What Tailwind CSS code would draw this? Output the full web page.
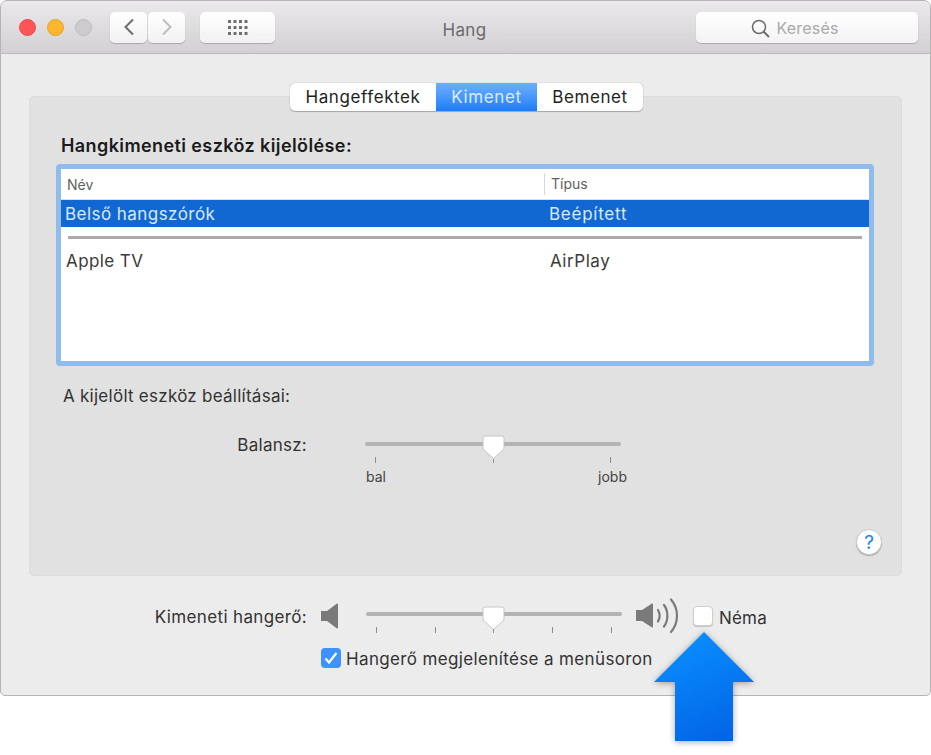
<!DOCTYPE html>
<html lang="hu">
<head>
<meta charset="UTF-8">
<title>Hang</title>
<script src="https://cdn.jsdelivr.net/npm/@tailwindcss/browser@4"></script>
</head>
<body class="bg-white w-[931px] h-[755px] overflow-hidden font-['Inter',sans-serif] text-[#2c2c2c]">
<div class="relative w-[931px] h-[755px]">
  <!-- window -->
  <div class="w-[931px] h-[696px] bg-[#ececec] rounded-t-[7px] rounded-b-[5px] border border-[#b4b4b4] flex flex-col">
    <!-- toolbar -->
    <div class="h-[53px] shrink-0 rounded-t-[6px] border-b border-[#bdbbbd] bg-gradient-to-b from-[#ebe9eb] to-[#d2d0d2] flex items-center pl-[18px] pr-[12px]">
      <div class="flex gap-[11px]">
        <span class="w-[17px] h-[17px] rounded-full bg-[#fd5557] border border-[#e9494c]"></span>
        <span class="w-[17px] h-[17px] rounded-full bg-[#fdb62e] border border-[#e6a526]"></span>
        <span class="w-[17px] h-[17px] rounded-full bg-[#cdcbcd] border border-[#bebcbe]"></span>
      </div>
      <div class="flex gap-px ml-[18px]">
        <div class="w-[37px] h-[31px] rounded-[5px] bg-gradient-to-b from-white to-[#f1f1f1] shadow-[0_1px_1px_#a9a7a9] flex items-center justify-center">
          <svg width="12" height="18" viewBox="0 0 12 18" fill="none" stroke="#6c6c6c" stroke-width="2"><path d="M10 1.500 2.500 9l7.500 7.500"/></svg>
        </div>
        <div class="w-[37px] h-[31px] rounded-[5px] bg-gradient-to-b from-white to-[#f1f1f1] shadow-[0_1px_1px_#a9a7a9] flex items-center justify-center">
          <svg width="12" height="18" viewBox="0 0 12 18" fill="none" stroke="#bdbdbd" stroke-width="2"><path d="M2 1.500 9.500 9 2 16.500"/></svg>
        </div>
      </div>
      <div class="w-[75px] h-[31px] ml-[15px] rounded-[5px] bg-gradient-to-b from-white to-[#f1f1f1] shadow-[0_1px_1px_#a9a7a9] flex items-center justify-center">
        <svg width="20" height="15" viewBox="0 0 20 15" fill="#6e6e6e">
          <rect x="0" y="0" width="3" height="3"/><rect x="5.500" y="0" width="3" height="3"/><rect x="11" y="0" width="3" height="3"/><rect x="16.500" y="0" width="3" height="3"/>
          <rect x="0" y="6" width="3" height="3"/><rect x="5.500" y="6" width="3" height="3"/><rect x="11" y="6" width="3" height="3"/><rect x="16.500" y="6" width="3" height="3"/>
          <rect x="0" y="12" width="3" height="3"/><rect x="5.500" y="12" width="3" height="3"/><rect x="11" y="12" width="3" height="3"/><rect x="16.500" y="12" width="3" height="3"/>
        </svg>
      </div>
      <div class="flex-1 text-center text-[17px] tracking-[0.4px] text-[#6b6a6b] pr-[42px] pt-[7px]">Hang</div>
      <div class="w-[222px] h-[31px] rounded-[5px] bg-gradient-to-b from-white to-[#f3f3f3] shadow-[0_1px_1px_#a9a7a9] flex items-center justify-center gap-[6px] pr-[24px] pt-[2px]">
        <svg width="19" height="19" viewBox="0 0 19 19" fill="none" stroke="#6c6c6c" stroke-width="1.500"><circle cx="8" cy="8" r="6.500"/><path d="m12.500 12.500 5.500 5.500" stroke-width="2"/></svg>
        <span class="text-[16px] text-[#a9a9a9] tracking-[0.2px]">Keresés</span>
      </div>
    </div>
    <!-- content -->
    <div class="relative flex-1 px-[28px] pt-[42px]">
      <!-- tabbed panel -->
      <div class="h-[480px] bg-[#e1e1e1] border border-[#dcdcdc] rounded-[5px] px-[27px] pt-[37px]">
        <div class="ml-[4px] text-[18px] tracking-[0.4px] font-semibold text-[#1b1b1b] leading-[24px]">Hangkimeneti eszköz kijelölése:</div>
        <!-- device list -->
        <div class="mt-[6px] -ml-px w-[818px] h-[202px] border-[5px] border-[#8fbcec] rounded-[4px] bg-white flex flex-col">
          <div class="h-[31px] shrink-0 flex items-center border-b border-[#dedede] text-[14px] text-[#5f5f5f]">
            <span class="w-[483px] pl-[6px]">Név</span>
            <span class="h-[22px] border-l border-[#d8d8d8] pl-[6px] leading-[22px]">Típus</span>
          </div>
          <div class="h-[27px] shrink-0 flex items-center bg-[#1268d3] text-[#dce9f8] text-[17px] pt-[3px]">
            <span class="w-[488px] pl-[4px] tracking-[0.45px]">Belső hangszórók</span>
            <span class="tracking-[0.75px]">Beépített</span>
          </div>
          <div class="h-[3px] shrink-0 mx-[7px] mt-[9px] bg-[#ababab]"></div>
          <div class="h-[27px] mt-[8px] flex items-center text-[17px] text-[#3a3a3a] pt-[3px]">
            <span class="w-[489px] pl-[5px] tracking-[0.4px]">Apple TV</span>
            <span class="tracking-[0.55px]">AirPlay</span>
          </div>
        </div>
        <div class="mt-[18px] ml-[6px] text-[17px] tracking-[0.26px] leading-[24px] text-[#333]">A kijelölt eszköz beállításai:</div>
        <!-- balance -->
        <div class="mt-[25px] flex">
          <div class="w-[250px] text-right text-[17px] tracking-[0.25px] leading-[24px] text-[#333]">Balansz:</div>
          <div class="relative ml-[58px] w-[256px] h-[60px]">
            <div class="absolute left-0 right-0 top-[9px] h-[4px] rounded-full bg-[#b3b3b3]"></div>
            <svg class="absolute left-[117px] top-[2px]" width="23" height="25" viewBox="0 0 23 25"><path d="M3 1h17a2 2 0 0 1 2 2v11l-10.500 9.500L1 14V3a2 2 0 0 1 2-2z" fill="#fff" stroke="#c6c6c6"/></svg>
            <span class="absolute left-[10px] top-[24px] w-px h-[6px] bg-[#8d8d8d]"></span>
            <span class="absolute left-[128px] top-[26px] w-px h-[4px] bg-[#8d8d8d]"></span>
            <span class="absolute left-[245px] top-[24px] w-px h-[6px] bg-[#8d8d8d]"></span>
            <span class="absolute left-px top-[35px] text-[14px] leading-[18px] text-[#444]">bal</span>
            <span class="absolute right-[-6px] top-[35px] text-[14px] leading-[18px] text-[#444]">jobb</span>
          </div>
        </div>
      </div>
      <!-- segmented tabs over the panel edge -->
      <div class="absolute left-[289px] top-[29px] w-[353px] h-[28px] rounded-[5px] bg-white shadow-[0_0_1px_#8e8e8e,0_1px_1px_#a8a8a8] flex text-[17px] tracking-[0.6px] text-[#1e1e1e] overflow-hidden">
        <div class="w-[146px] flex items-center justify-center pt-[2px]">Hangeffektek</div>
        <div class="w-[101px] flex items-center justify-center pt-[2px] text-[#dcebfd] bg-gradient-to-b from-[#6cb0fb] to-[#1a7bfb]">Kimenet</div>
        <div class="flex-1 flex items-center justify-center pt-[2px]">Bemenet</div>
      </div>
      <!-- help button -->
      <div class="absolute left-[855px] top-[475px] w-[26px] h-[26px] rounded-full bg-white border border-[#cdcdcd] shadow-[0_1px_1px_#a8a8a8] flex items-center justify-center text-[#2582f7] text-[19px] leading-none">?</div>
      <!-- volume -->
      <div class="flex h-[60px] mt-[22px] items-start">
        <div class="w-[278px] text-right text-[17px] tracking-[0.35px] leading-[38px] text-[#333] shrink-0">Kimeneti hangerő:</div>
        <svg class="ml-[13px] mt-[5px] shrink-0" width="19" height="26" viewBox="0 0 19 26" fill="#7a7a7a"><path d="M1 8h6l10-7.500c.8 0 1 .5 1 1v23c0 .5-.2 1-1 1L7 18H1z"/></svg>
        <div class="relative ml-[27px] w-[256px] h-[44px] shrink-0">
          <div class="absolute left-0 right-0 top-[14px] h-[4px] rounded-full bg-[#b3b3b3]"></div>
          <svg class="absolute left-[116px] top-[8px]" width="23" height="25" viewBox="0 0 23 25"><path d="M3 1h17a2 2 0 0 1 2 2v11l-10.500 9.500L1 14V3a2 2 0 0 1 2-2z" fill="#fff" stroke="#c6c6c6"/></svg>
          <span class="absolute left-[10px] top-[29px] w-px h-[6px] bg-[#8d8d8d]"></span>
          <span class="absolute left-[69px] top-[29px] w-px h-[6px] bg-[#8d8d8d]"></span>
          <span class="absolute left-[127px] top-[31px] w-px h-[4px] bg-[#8d8d8d]"></span>
          <span class="absolute left-[186px] top-[29px] w-px h-[6px] bg-[#8d8d8d]"></span>
          <span class="absolute left-[245px] top-[29px] w-px h-[6px] bg-[#8d8d8d]"></span>
        </div>
        <svg class="ml-[13px] mt-[-1px] shrink-0" width="45" height="38" viewBox="0 0 45 38" fill="none"><path d="M1 13h6l10-6.500c.8 0 1 .5 1 1v22c0 .5-.2 1-1 1L7 24H1z" fill="#7a7a7a"/><path d="M23 13c2 3.500 2 8 0 11.500M29 8c4.500 6 4.500 15.500 0 21.500M36 2.500c8 9.500 8 23 0 32.500" stroke="#7a7a7a" stroke-width="2.200" stroke-linecap="round"/></svg>
        <span class="ml-[13px] mt-[8px] w-[20px] h-[20px] rounded-[4px] bg-white border border-[#cfcfcf] shadow-[0_1px_1px_#c4c4c4] shrink-0"></span>
        <span class="ml-[6px] text-[17px] tracking-[0.2px] leading-[40px] text-[#333]">Néma</span>
      </div>
      <!-- menu bar option -->
      <div class="absolute left-[320px] top-[593px] flex items-center gap-[5px]">
        <span class="w-[20px] h-[20px] -mt-[3px] rounded-[4px] bg-[#3f92fb] flex items-center justify-center">
          <svg width="14" height="12" viewBox="0 0 14 12" fill="none" stroke="#fff" stroke-width="2.200"><path d="m1.500 6.500 3.500 4L12.500 1"/></svg>
        </span>
        <span class="text-[17px] tracking-[0.36px] leading-[24px] text-[#333]">Hangerő megjelenítése a menüsoron</span>
      </div>
    </div>
  </div>
  <!-- callout arrow -->
  <svg class="absolute left-[652px] top-[631px] drop-shadow-[0_1px_3px_rgba(0,0,0,0.35)]" width="104" height="112" viewBox="0 0 104 112">
    <defs><linearGradient id="arrow" x1="0.300" y1="0" x2="0.700" y2="1"><stop offset="0" stop-color="#0a8fff"/><stop offset="1" stop-color="#0264e6"/></linearGradient></defs>
    <path d="M52 1 102 51H81v59H23V51H2z" fill="url(#arrow)"/>
  </svg>
</div>
</body>
</html>
